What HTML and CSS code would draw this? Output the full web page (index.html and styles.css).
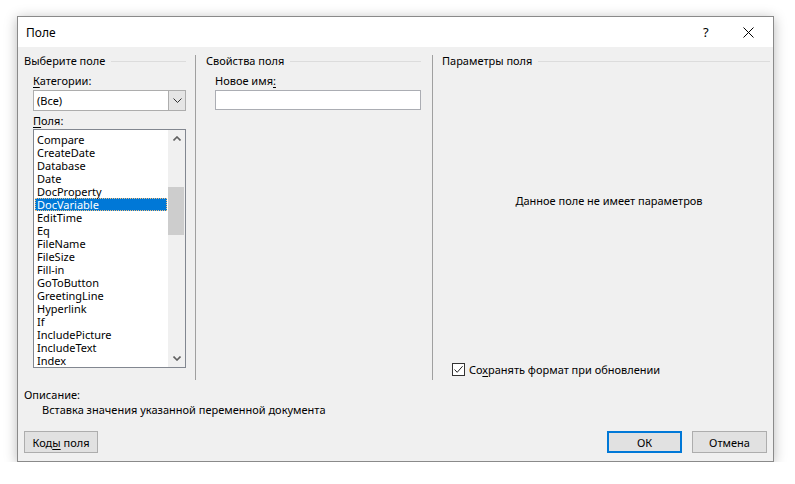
FILE: index.html
```html
<!DOCTYPE html>
<html lang="ru">
<head>
    <meta charset="UTF-8">
    <title>Поле</title>
    <link rel="stylesheet" href="styles.css">
</head>
<body>
    <div class="dialog">
        <div class="title-bar">
            <span class="title">Поле</span>
            <span class="help">?</span>
            <span class="close">
                <svg width="11" height="11" viewBox="0 0 11 11"><path d="M0.5 0.5 L10.5 10.5 M10.5 0.5 L0.5 10.5" stroke="#000" stroke-width="1" fill="none"/></svg>
            </span>
        </div>
        <div class="dialog-body">
            <div class="main">
                <div class="col col-select">
                    <div class="group-title"><span>Выберите поле</span></div>
                    <div class="field-label label-cat"><u>К</u>атегории:</div>
                    <div class="combo">
                        <span class="combo-text">(Все)</span>
                        <span class="combo-button">
                            <svg width="9" height="5" viewBox="0 0 9 5"><path d="M0.5 0.5 L4.5 4.5 L8.5 0.5" stroke="#333" stroke-width="1" fill="none"/></svg>
                        </span>
                    </div>
                    <div class="field-label label-fields"><u>П</u>оля:</div>
                    <div class="listbox">
                        <ul class="items">
                            <li>Compare</li>
                            <li>CreateDate</li>
                            <li>Database</li>
                            <li>Date</li>
                            <li>DocProperty</li>
                            <li class="selected">DocVariable</li>
                            <li>EditTime</li>
                            <li>Eq</li>
                            <li>FileName</li>
                            <li>FileSize</li>
                            <li>Fill-in</li>
                            <li>GoToButton</li>
                            <li>GreetingLine</li>
                            <li>Hyperlink</li>
                            <li>If</li>
                            <li>IncludePicture</li>
                            <li>IncludeText</li>
                            <li>Index</li>
                        </ul>
                        <div class="scrollbar">
                            <div class="arrow">
                                <svg width="8" height="5" viewBox="0 0 8 5"><path d="M0.5 4.5 L4 1 L7.5 4.5" stroke="#606060" stroke-width="1.6" fill="none"/></svg>
                            </div>
                            <div class="track">
                                <div class="thumb"></div>
                            </div>
                            <div class="arrow">
                                <svg width="8" height="5" viewBox="0 0 8 5"><path d="M0.5 0.5 L4 4 L7.5 0.5" stroke="#606060" stroke-width="1.6" fill="none"/></svg>
                            </div>
                        </div>
                    </div>
                </div>
                <div class="separator"></div>
                <div class="col col-props">
                    <div class="group-title"><span>Свойства поля</span></div>
                    <div class="field-label label-cat">Новое имя<u>:</u></div>
                    <div class="textbox"></div>
                </div>
                <div class="separator"></div>
                <div class="col col-params">
                    <div class="group-title"><span>Параметры поля</span></div>
                    <div class="no-params">Данное поле не имеет параметров</div>
                    <div class="check-row">
                        <span class="checkbox">
                            <svg width="11" height="11" viewBox="0 0 11 11"><path d="M1.5 5.5 L4.2 8.3 L9.6 2.2" stroke="#222" stroke-width="1" fill="none"/></svg>
                        </span>
                        <span>Со<u>х</u>ранять формат при обновлении</span>
                    </div>
                </div>
            </div>
            <div class="description">
                <div class="desc-label">Описание:</div>
                <div class="desc-text">Вставка значения указанной переменной документа</div>
            </div>
            <div class="buttons">
                <button class="btn btn-codes">Код<u>ы</u> поля</button>
                <div class="spacer"></div>
                <button class="btn btn-default">ОК</button>
                <button class="btn">Отмена</button>
            </div>
        </div>
    </div>
</body>
</html>
```

FILE: styles.css
```css
* {
    margin: 0;
    padding: 0;
    box-sizing: border-box;
}

body {
    background-color: #fff;
    font-family: "Noto Sans", "Open Sans", sans-serif;
    font-size: 11px;
    color: #000;
}

u {
    text-decoration: underline;
    text-underline-offset: 2px;
}

.dialog {
    margin: 16px 0 0 17px;
    width: 757px;
    height: 446px;
    border: 1px solid #8a8a8a;
    box-shadow: 0 2px 12px rgba(0, 0, 0, 0.28);
    display: flex;
    flex-direction: column;
    background-color: #f0f0f0;
}

.title-bar {
    height: 30px;
    background-color: #fff;
    display: flex;
    align-items: center;
    padding-left: 8px;
}

.title {
    flex: 1;
    font-size: 12px;
}

.help {
    width: 14px;
    margin-right: 26px;
    font-size: 13px;
}

.close {
    width: 11px;
    margin-right: 19px;
    display: flex;
}

.dialog-body {
    flex: 1;
    display: flex;
    flex-direction: column;
}

.main {
    display: flex;
    height: 333px;
}

.col {
    display: flex;
    flex-direction: column;
    padding-top: 6px;
}

.col-select {
    width: 177px;
    padding-left: 6px;
    padding-right: 9px;
}

.col-props {
    width: 236px;
    padding-left: 10px;
    padding-right: 11px;
}

.col-params {
    flex: 1;
    padding-left: 9px;
    padding-right: 3px;
}

.separator {
    width: 1px;
    margin-top: 8px;
    background-color: #a0a0a0;
}

.group-title {
    display: flex;
    align-items: center;
    height: 16px;
    line-height: 16px;
}

.group-title::after {
    content: "";
    flex: 1;
    height: 1px;
    margin-left: 6px;
    background-color: #dcdcdc;
}

.field-label {
    height: 16px;
    line-height: 16px;
    margin-left: 9px;
}

.label-cat {
    margin-top: 4px;
}

.label-fields {
    margin-top: 2px;
}

.combo {
    margin: 1px 0 0 9px;
    height: 21px;
    display: flex;
    border: 1px solid #adadad;
    background-color: #fff;
}

.combo-text {
    flex: 1;
    line-height: 19px;
    padding-left: 3px;
}

.combo-button {
    width: 18px;
    margin: -1px -1px -1px 0;
    border: 1px solid #adadad;
    background-color: #e5e5e5;
    display: flex;
    align-items: center;
    justify-content: center;
}

.textbox {
    margin: 1px 0 0 9px;
    height: 20px;
    border: 1px solid #abadb3;
    background-color: #fff;
}

.listbox {
    margin-left: 9px;
    height: 239px;
    border: 1px solid #828790;
    background-color: #fff;
    display: flex;
}

.items {
    list-style: none;
    flex: 1;
    padding-top: 3px;
    overflow: hidden;
}

.items li {
    height: 13px;
    line-height: 13px;
    padding-left: 2px;
    margin-left: 1px;
    margin-right: 1px;
    white-space: nowrap;
}

.items li.selected {
    background-color: #0078d7;
    color: #fff;
    outline: 1px dotted #f0c080;
    outline-offset: -1px;
}

.scrollbar {
    width: 17px;
    background-color: #f0f0f0;
    display: flex;
    flex-direction: column;
}

.arrow {
    height: 17px;
    display: flex;
    align-items: center;
    justify-content: center;
}

.track {
    flex: 1;
    padding-top: 40px;
}

.thumb {
    margin: 0 1px 0 0;
    height: 48px;
    background-color: #cdcdcd;
}

.no-params {
    margin-top: 124px;
    padding-left: 6px;
    text-align: center;
    line-height: 16px;
}

.check-row {
    margin-top: auto;
    margin-bottom: 3px;
    margin-left: 10px;
    display: flex;
    align-items: center;
    height: 16px;
}

.checkbox {
    width: 13px;
    height: 13px;
    margin-right: 4px;
    border: 1px solid #333;
    background-color: #fff;
    display: flex;
    align-items: center;
    justify-content: center;
}

.description {
    margin-top: 7px;
    padding-left: 6px;
    line-height: 15px;
}

.desc-text {
    padding-left: 18px;
}

.buttons {
    margin-top: 14px;
    display: flex;
    padding: 0 6px;
}

.spacer {
    flex: 1;
}

.btn {
    height: 22px;
    width: 75px;
    font-family: "Noto Sans", "Open Sans", sans-serif;
    font-size: 11px;
    color: #000;
    background-color: #e1e1e1;
    border: 1px solid #adadad;
}

.btn-codes {
    width: 74px;
}

.btn-default {
    border: 2px solid #0078d7;
    margin-right: 10px;
}
```
